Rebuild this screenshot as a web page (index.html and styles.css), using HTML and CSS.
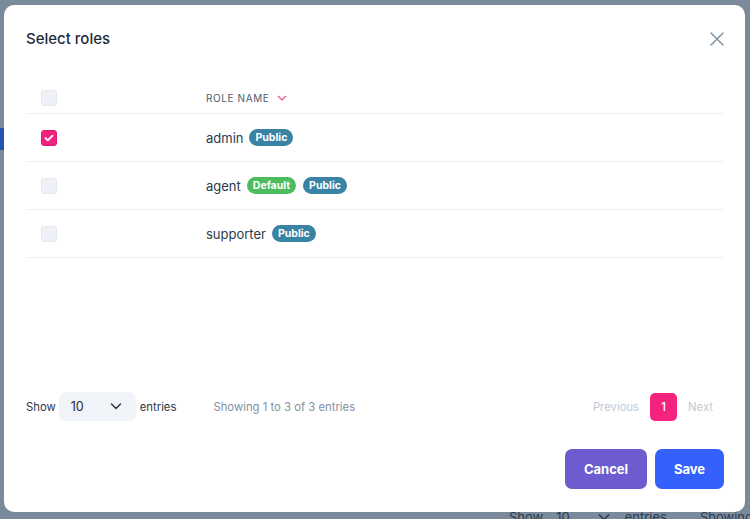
FILE: index.html
```html
<!DOCTYPE html>
<html lang="en">
<head>
<meta charset="utf-8">
<title>Select roles</title>
<link rel="stylesheet" href="styles.css">
</head>
<body>
<div class="page">
  <div class="side-indicator"></div>
  <div class="page-footer">
    <span class="bg-show">Show</span>
    <span class="bg-num">10</span>
    <svg class="bg-chev" width="12" height="8" viewBox="0 0 12 8"><path d="M1 1.5 6 6.5 11 1.5" fill="none" stroke="#2e3c4d" stroke-width="1.6"/></svg>
    <span class="bg-entries">entries</span>
    <span class="bg-showing">Showing 1 to 3 of 3 entries</span>
  </div>
</div>

<div class="modal">
  <div class="modal-header">
    <h2 class="modal-title">Select roles</h2>
    <button class="close-btn" aria-label="Close">
      <svg width="14" height="14" viewBox="0 0 14 14"><path d="M1 1 13 13M13 1 1 13" stroke="#8797a8" stroke-width="1.6" fill="none" stroke-linecap="round"/></svg>
    </button>
  </div>

  <div class="table">
    <div class="row head">
      <div class="cell-check"><span class="checkbox"></span></div>
      <div class="cell-name">
        <span class="head-label">ROLE NAME</span>
        <svg class="sort" width="10" height="6" viewBox="0 0 10 6"><path d="M1 1 5 5 9 1" fill="none" stroke="#f2478f" stroke-width="1.2"/></svg>
      </div>
    </div>
    <div class="row">
      <div class="cell-check"><span class="checkbox checked"><svg width="10" height="8" viewBox="0 0 10 8"><path d="M1.5 4.2 3.8 6.3 8.5 1.6" fill="none" stroke="#fff" stroke-width="1.8" stroke-linecap="round" stroke-linejoin="round"/></svg></span></div>
      <div class="cell-name"><span class="role">admin</span><span class="badge public">Public</span></div>
    </div>
    <div class="row">
      <div class="cell-check"><span class="checkbox"></span></div>
      <div class="cell-name"><span class="role">agent</span><span class="badge default">Default</span><span class="badge public">Public</span></div>
    </div>
    <div class="row">
      <div class="cell-check"><span class="checkbox"></span></div>
      <div class="cell-name"><span class="role">supporter</span><span class="badge public">Public</span></div>
    </div>
  </div>

  <div class="spacer"></div>

  <div class="pager-row">
    <div class="length">
      <span>Show</span>
      <span class="select">10 <svg width="12" height="7" viewBox="0 0 12 7"><path d="M1.5 1 6 5.5 10.5 1" fill="none" stroke="#2d3748" stroke-width="1.5" stroke-linecap="round" stroke-linejoin="round"/></svg></span>
      <span>entries</span>
    </div>
    <div class="info">Showing 1 to 3 of 3 entries</div>
    <div class="pagination">
      <span class="page-link disabled">Previous</span>
      <span class="page-num">1</span>
      <span class="page-link disabled">Next</span>
    </div>
  </div>

  <div class="actions">
    <button class="btn cancel">Cancel</button>
    <button class="btn save">Save</button>
  </div>
</div>
</body>
</html>
```

FILE: styles.css
```css
* { box-sizing: border-box; }
html, body { margin: 0; padding: 0; }
body {
  width: 750px;
  height: 519px;
  overflow: hidden;
  background: #7a8a9b;
  font-family: Inter, "Noto Sans", "Liberation Sans", sans-serif;
  color: #2d3748;
}
.page {
  position: relative;
  height: 519px;
}
.side-indicator {
  position: absolute;
  left: 0;
  top: 128px;
  width: 4px;
  height: 22px;
  background: #2453b4;
}
.page-footer {
  position: absolute;
  left: 509px;
  top: 509px;
  display: flex;
  align-items: center;
  font-size: 13px;
  color: #2e3c4d;
  white-space: nowrap;
}
.bg-num { margin-left: 13px; }
.bg-chev { margin-left: 28px; }
.bg-entries { margin-left: 15px; }
.bg-showing { margin-left: 33px; }

.modal {
  position: fixed;
  left: 4px;
  top: 5px;
  width: 741px;
  height: 507px;
  background: #fff;
  border-radius: 10px;
  display: flex;
  flex-direction: column;
  padding: 0 21px 23px 22px;
}
.modal-header {
  margin-top: 24px;
  height: 20px;
  display: flex;
  align-items: center;
  justify-content: space-between;
}
.modal-title {
  margin: 0;
  font-size: 15px;
  font-weight: 500;
  color: #1e2a3b;
  line-height: 20px;
}
.close-btn {
  border: 0;
  background: none;
  padding: 0;
  width: 14px;
  height: 14px;
  display: flex;
}

.table { margin-top: 34px; }
.row {
  display: grid;
  grid-template-columns: 180px 1fr;
  align-items: center;
  height: 48px;
  border-bottom: 1px solid #edf0f3;
}
.row.head { height: 31px; padding-bottom: 1px; }
.cell-check { padding-left: 15px; display: flex; }
.checkbox {
  width: 16px;
  height: 16px;
  border-radius: 3px;
  background: #eef1f5;
  border: 1px solid #e3e8ee;
  display: inline-flex;
  align-items: center;
  justify-content: center;
}
.checkbox.checked {
  background: #f0247e;
  border-color: #e01a70;
}
.cell-name { display: flex; align-items: center; }
.head-label {
  font-size: 10px;
  letter-spacing: 0.6px;
  color: #4f5d6e;
  font-weight: 400;
}
.sort { margin-left: 8px; }
.role { font-size: 13px; color: #2d3a4b; }
.badge {
  height: 17px;
  line-height: 17px;
  padding: 0 6px;
  border-radius: 9px;
  font-size: 10.5px;
  font-weight: 700;
  color: #fff;
  margin-left: 6px;
}
.badge + .badge { margin-left: 7px; }
.badge.public { background: #3983a5; }
.badge.default { background: #4cbd5f; }

.spacer { flex: 1; }

.pager-row {
  height: 29px;
  display: flex;
  align-items: center;
  font-size: 11.3px;
}
.length { display: flex; align-items: center; color: #2d3748; }
.select {
  margin: 0 4px 0 3px;
  width: 77px;
  height: 29px;
  border-radius: 7px;
  background: #f0f3f7;
  display: flex;
  align-items: center;
  justify-content: space-between;
  padding: 0 14px 0 12px;
  font-size: 12.5px;
  color: #1f2a38;
}
.info { margin-left: 37px; color: #8391a3; }
.pagination { margin-left: auto; display: flex; align-items: center; }
.page-link { padding: 0 11px; color: #c3cad4; }
.page-num {
  width: 27px;
  height: 28px;
  border-radius: 5px;
  background: #f4237d;
  color: #fff;
  display: flex;
  align-items: center;
  justify-content: center;
  font-size: 12px;
  font-weight: 500;
}

.actions {
  margin-top: 28px;
  display: flex;
  justify-content: flex-end;
  gap: 8px;
}
.btn {
  height: 40px;
  border: 0;
  border-radius: 7px;
  padding: 0 18px;
  font-family: inherit;
  font-size: 13px;
  font-weight: 700;
  color: #fff;
}
.btn.cancel { background: #6c5ccf; width: 82px; }
.btn.save { background: #3461fb; width: 69px; }
```
